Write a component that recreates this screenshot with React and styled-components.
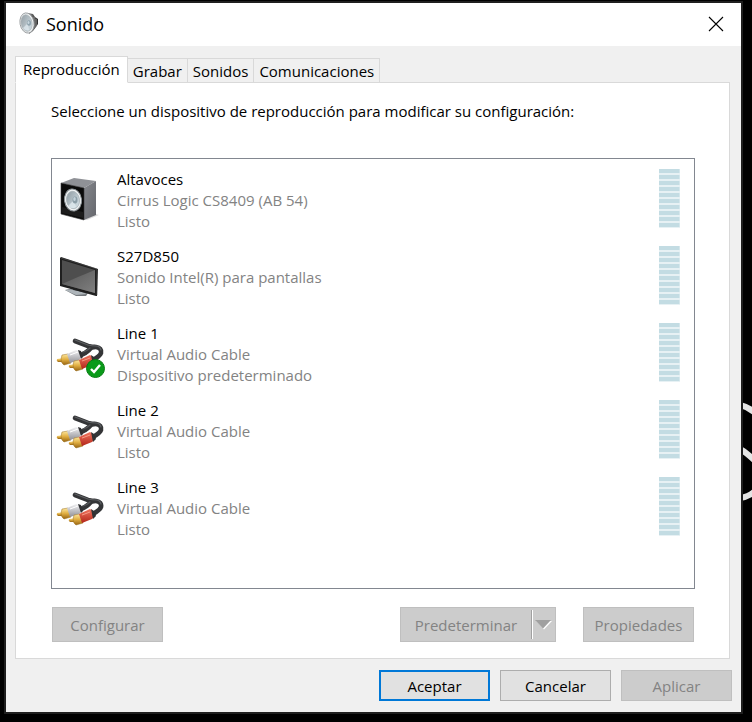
import React from 'react'
import styled, { createGlobalStyle } from 'styled-components'


const tabs = ["Reproducción", "Grabar", "Sonidos", "Comunicaciones"]

const devices = [
    { name: "Altavoces", driver: "Cirrus Logic CS8409 (AB 54)", status: "Listo", icon: "speaker" },
    { name: "S27D850", driver: "Sonido Intel(R) para pantallas", status: "Listo", icon: "monitor" },
    { name: "Line 1", driver: "Virtual Audio Cable", status: "Dispositivo predeterminado", icon: "cable", isDefault: true },
    { name: "Line 2", driver: "Virtual Audio Cable", status: "Listo", icon: "cable" },
    { name: "Line 3", driver: "Virtual Audio Cable", status: "Listo", icon: "cable" },
]


const SoundIcon = () => (
    <svg width="20" height="24" viewBox="0 0 20 24" aria-hidden="true">
        <defs>
            <linearGradient id="horn" x1="0" x2="1">
                <stop offset="0" stopColor="#888" />
                <stop offset="1" stopColor="#2c2c2c" />
            </linearGradient>
            <linearGradient id="horn-cone" x1="0" x2="1" y1="0" y2="1">
                <stop offset="0" stopColor="#929ca2" />
                <stop offset="1" stopColor="#d5e2e8" />
            </linearGradient>
        </defs>
        <path d="M9 1 L14 2 L16 5 L19 7 L19 12 L17 15 L14 19 L10 22z" fill="url(#horn)" />
        <path d="M15 5v11M17 7v8" stroke="#aaa" strokeWidth="0.7" />
        <ellipse cx="8" cy="11" rx="7" ry="10.2" fill="#f0f2f3" stroke="#8d9295" strokeWidth="0.8" transform="rotate(-10 8 11)" />
        <ellipse cx="7.6" cy="11" rx="5.5" ry="8.4" fill="url(#horn-cone)" stroke="#a6adb1" strokeWidth="0.6" transform="rotate(-10 8 11)" />
        <path d="M9 11 L4 16 Q6 19 10 18z" fill="#e2edf2" opacity="0.7" />
        <ellipse cx="10" cy="11" rx="2" ry="2.8" fill="#90a4ae" />
        <ellipse cx="9.5" cy="10.5" rx="1" ry="1.6" fill="#c8d6de" />
    </svg>
)

const SpeakerIcon = () => (
    <svg width="51" height="51" viewBox="0 0 51 51" aria-hidden="true">
        <defs>
            <linearGradient id="side" x1="0" x2="1" y1="0" y2="1">
                <stop offset="0" stopColor="#85878c" />
                <stop offset="1" stopColor="#65676d" />
            </linearGradient>
            <linearGradient id="cone" x1="0" x2="1" y1="0" y2="1">
                <stop offset="0" stopColor="#8b979e" />
                <stop offset="1" stopColor="#dbe8ee" />
            </linearGradient>
        </defs>
        <path d="M28 45 L40 39 L43 40 L31 45z" fill="#ddd" />
        <path d="M5 8 L18 3 L40 6 L28 13z" fill="#8f9196" />
        <path d="M28 13 L40 6 L40 40 L28 45z" fill="url(#side)" />
        <path d="M5 8 L28 13 L28 45 L5 39z" fill="#0b0b0b" stroke="#3b3b3d" strokeWidth="0.6" />
        <path d="M6 32 L27 37 L27 43 L6 38z" fill="#1c1c1c" />
        <ellipse cx="17" cy="25" rx="8.5" ry="11" fill="#f3f5f6" stroke="#8c9397" strokeWidth="1" transform="rotate(-8 17 25)" />
        <ellipse cx="17" cy="25" rx="6.5" ry="8.8" fill="url(#cone)" stroke="#a9b3b8" strokeWidth="0.8" transform="rotate(-8 17 25)" />
        <path d="M18 25 L12 31 Q15 35 20 32z" fill="#e5f0f4" opacity="0.7" />
        <ellipse cx="19" cy="25" rx="2.5" ry="3.4" fill="#8d9fa8" />
        <ellipse cx="18.5" cy="24" rx="1.3" ry="2" fill="#c3d2da" />
    </svg>
)

const MonitorIcon = () => (
    <svg width="51" height="51" viewBox="0 0 51 51" aria-hidden="true">
        <defs>
            <linearGradient id="screen" x1="0" x2="1" y1="0" y2="1">
                <stop offset="0" stopColor="#555" />
                <stop offset="1" stopColor="#808080" />
            </linearGradient>
        </defs>
        <path d="M9 38 L18 36 L32 41 L30 44 L20 44z" fill="#74797d" />
        <path d="M9 38 L18 37 L31 42 L20 43z" fill="#aeb5ba" />
        <path d="M17 34 L27 37 L27 40 L17 38z" fill="#4b4f52" />
        <path d="M4 6 L5 5 L42 17 L41 44 L40 44 L4 34z" fill="#1f1f1f" />
        <path d="M6 8 L39 18 L39 41 L6 32z" fill="#4e4e4e" />
        <path d="M39 18 L39 41 L6 32 L22 25z" fill="url(#screen)" />
        <path d="M5 6 L41 17 L41 43" fill="none" stroke="#5b5b5b" strokeWidth="0.5" />
    </svg>
)

const CableIcon = ({ isDefault }) => (
    <svg width="51" height="51" viewBox="0 0 51 51" aria-hidden="true">
        <defs>
            <linearGradient id="white-plug" x1="0" x2="0" y1="0" y2="1">
                <stop offset="0" stopColor="#f3f3f5" />
                <stop offset="1" stopColor="#909096" />
            </linearGradient>
            <linearGradient id="red-plug" x1="0" x2="0" y1="0" y2="1">
                <stop offset="0" stopColor="#f0755f" />
                <stop offset="1" stopColor="#b3261a" />
            </linearGradient>
            <linearGradient id="gold" x1="0" x2="0" y1="0" y2="1">
                <stop offset="0" stopColor="#ffe9a0" />
                <stop offset="0.5" stopColor="#e0ae42" />
                <stop offset="1" stopColor="#976411" />
            </linearGradient>
        </defs>
        <g fill="none" strokeLinecap="round">
            <path d="M19 12 L32 17 Q36 18 40 18 Q46 19 45 24 Q44 27 37 31" stroke="#343537" strokeWidth="4.6" />
            <path d="M39 18 Q35 18 33 21 Q30 24 25 26" stroke="#343537" strokeWidth="4.6" />
            <path d="M19 11 L32 16 Q36 17 40 17 Q44 17 45 21" stroke="#5e6063" strokeWidth="1.2" />
            <path d="M34 19 Q31 22 27 23" stroke="#55575a" strokeWidth="1.2" />
        </g>
        <path d="M1 30 L7 29 L8 33 L2 33 Q0 32 1 30z" fill="url(#gold)" />
        <path d="M6 26 L12 25 L15 34 L8 36 Q5 34 5 30z" fill="url(#gold)" stroke="#9b7020" strokeWidth="0.5" />
        <path d="M11 25 L20 21 L23 22 L26 28 L23 31 L14 34z" fill="url(#white-plug)" />
        <path d="M14 26 L22 23" stroke="#fff" strokeWidth="1" />
        <path d="M22 21 L25 22 L27 28 L25 30z" fill="#303133" />
        <path d="M13 36 L19 35 L20 39 L14 39 Q12 38 13 36z" fill="url(#gold)" />
        <path d="M18 32 L24 31 L27 40 L20 42 Q17 40 17 36z" fill="url(#gold)" stroke="#9b7020" strokeWidth="0.5" />
        <path d="M23 31 L34 26 L37 28 L38 34 L36 36 L26 40z" fill="url(#red-plug)" />
        <path d="M26 32 L34 29" stroke="#f79a85" strokeWidth="1" />
        <path d="M35 26 L38 28 L40 33 L37 36z" fill="#303133" />
        {
            isDefault && (
                <g>
                    <circle cx="39.5" cy="39.5" r="9" fill="#0a9a19" stroke="#087e13" />
                    <path d="M35 40 L38 43 L44 36" fill="none" stroke="#fff" strokeWidth="2.4" />
                </g>
            )
        }
    </svg>
)

const CloseIcon = () => (
    <svg width="16" height="16" viewBox="0 0 16 16" aria-hidden="true">
        <path d="M1 1 L15 15 M15 1 L1 15" stroke="#000" strokeWidth="1.1" />
    </svg>
)

const ArrowIcon = () => (
    <svg width="17" height="10" viewBox="0 0 17 10" aria-hidden="true">
        <path d="M1 1 H17 L9 9.5z" fill="#fff" />
        <path d="M0 0 H16 L8 8.5z" fill="#a0a0a0" />
    </svg>
)

const icons = { speaker: SpeakerIcon, monitor: MonitorIcon, cable: CableIcon }


const Device = ({ name, driver, status, icon, isDefault }) => {

    const Icon = icons[icon]

    return (
        <DeviceRow>
            <Icon isDefault={isDefault} />
            <div className="info">
                <p className="name">{name}</p>
                <p>{driver}</p>
                <p>{status}</p>
            </div>
            <Meter>
                {Array.from({ length: 10 }, (_, index) => <span key={index} />)}
            </Meter>
        </DeviceRow>
    )

}


const App = () => {

    return (
        <Desktop>
            <GlobalStyle />
            <Backdrop width="12" height="110" viewBox="0 0 12 110" aria-hidden="true">
                <path d="M0 6 Q8 8 14 13 M0 50 Q6 53 14 61 M0 99 Q8 98 14 93" fill="none" stroke="#e4e4e4" strokeWidth="6" />
            </Backdrop>
            <Dialog>
                <TitleBar>
                    <SoundIcon />
                    <h1>Sonido</h1>
                    <CloseButton type="button" aria-label="Cerrar"><CloseIcon /></CloseButton>
                </TitleBar>
                <Content>
                    <TabList role="tablist">
                        {tabs.map((tab, index) => (
                            <Tab key={tab} type="button" role="tab" aria-selected={index === 0} $active={index === 0}>{tab}</Tab>
                        ))}
                    </TabList>
                    <Panel role="tabpanel">
                        <p className="intro">Seleccione un dispositivo de reproducción para modificar su configuración:</p>
                        <DeviceList>
                            {devices.map((device) => <Device key={device.name} {...device} />)}
                        </DeviceList>
                        <Actions>
                            <Button type="button" $tall disabled>Configurar</Button>
                            <SplitButton>
                                <button type="button" className="main" disabled>Predeterminar</button>
                                <button type="button" className="arrow" aria-label="Más opciones" disabled><ArrowIcon /></button>
                            </SplitButton>
                            <Button type="button" $tall disabled>Propiedades</Button>
                        </Actions>
                    </Panel>
                </Content>
                <Footer>
                    <Button type="button" $primary>Aceptar</Button>
                    <Button type="button">Cancelar</Button>
                    <Button type="button" disabled>Aplicar</Button>
                </Footer>
            </Dialog>
        </Desktop>
    )

}


const GlobalStyle = createGlobalStyle `

    * {
        box-sizing: border-box;
        margin: 0;
        padding: 0;
    }

    body {
        background: #000;
        color: #000;
        font-family: "Open Sans", "Noto Sans", sans-serif;
        font-size: 15px;
    }

    button {
        font: inherit;
        color: inherit;
    }

`

const Desktop = styled.main `

    position: relative;
    display: flex;
    min-height: 100vh;
    padding: 1px 9px 8px 4px;
    overflow: hidden;

`

const Backdrop = styled.svg `

    position: absolute;
    right: 0;
    top: 399px;

`

const Dialog = styled.section `

    position: relative;
    flex: 1;
    display: flex;
    flex-direction: column;
    border: 2px solid #1f1f1f;
    background: #f0f0f0;

`

const TitleBar = styled.header `

    display: flex;
    align-items: center;
    height: 43px;
    padding: 0 0 2px 13px;
    background: #fff;

    h1 {
        flex: 1;
        margin-left: 7px;
        font-size: 18px;
        font-weight: 400;
        line-height: 24px;
    }

`

const CloseButton = styled.button `

    display: grid;
    place-items: center;
    width: 50px;
    height: 41px;
    border: none;
    background: none;

`

const Content = styled.div `

    flex: 1;
    display: flex;
    flex-direction: column;
    padding: 10px 11px 0 9px;

`

const TabList = styled.div `

    display: flex;
    align-items: flex-end;
    height: 27px;

`

const Tab = styled.button `

    position: relative;
    z-index: ${({ $active }) => $active ? 1 : 0};
    height: ${({ $active }) => $active ? "27px" : "25px"};
    padding: ${({ $active }) => $active ? "0 7px 2px" : "0 5px"};
    border: 1px solid #d9d9d9;
    border-bottom-color: ${({ $active }) => $active ? "#fff" : "#d9d9d9"};
    margin-right: -1px;
    background: ${({ $active }) => $active ? "#fff" : "#f0f0f0"};
    line-height: 22px;
    white-space: nowrap;

`

const Panel = styled.div `

    flex: 1;
    display: flex;
    flex-direction: column;
    padding: 18px 34px 16px 35px;
    border: 1px solid #d9d9d9;
    margin-top: -1px;
    background: #fff;

    .intro {
        margin-bottom: 36px;
        line-height: 21px;
    }

`

const DeviceList = styled.ul `

    flex: 1;
    padding: 3px 14px 3px 4px;
    border: 1px solid #828790;
    list-style: none;

`

const DeviceRow = styled.li `

    display: flex;
    align-items: center;
    height: 77px;

    .info {
        flex: 1;
        margin-left: 10px;
        color: #838383;
        line-height: 21px;
    }

    .name {
        color: #000;
    }

`

const Meter = styled.div `

    align-self: flex-start;
    display: grid;
    gap: 2px;
    width: 21px;
    padding-bottom: 1px;
    margin-top: 7px;
    background: #e7f1f4;

    span {
        height: 4px;
        border-right: 1px solid #d5e7ec;
        background: #c3dce3;
    }

`

const Actions = styled.div `

    display: flex;
    gap: 27px;
    padding: 0 1px;
    margin-top: 18px;

    > :first-child {
        margin-right: auto;
    }

`

const Button = styled.button `

    width: 111px;
    height: ${({ $tall }) => $tall ? "35px" : "31px"};
    border: ${({ $primary }) => $primary ? "2px solid #0078d7" : "1px solid #adadad"};
    background: #e1e1e1;

    &:disabled {
        border-color: #bfbfbf;
        background: #ccc;
        color: #838383;
    }

`

const SplitButton = styled.div `

    display: flex;
    width: 156px;
    height: 35px;
    border: 1px solid #bfbfbf;
    background: #ccc;
    color: #838383;

    button {
        border: none;
        background: none;
    }

    .main {
        flex: 1;
    }

    .arrow {
        display: grid;
        place-items: center;
        width: 24px;
        margin: 2px 0;
        border-left: 1px solid #a0a0a0;
        box-shadow: inset 1px 0 #fff;
    }

`

const Footer = styled.footer `

    display: flex;
    justify-content: flex-end;
    gap: 10px;
    padding: 11px 9px;

`


export default App
